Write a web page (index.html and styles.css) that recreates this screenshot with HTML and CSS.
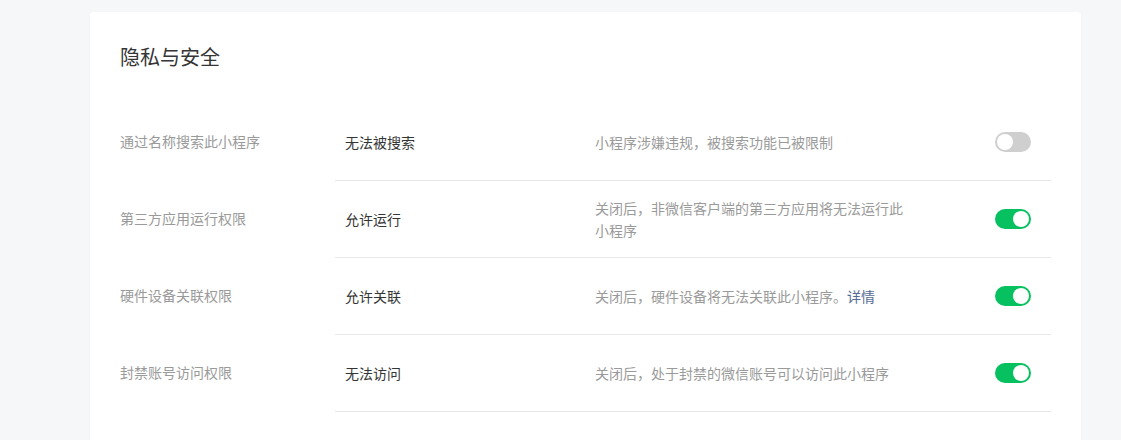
FILE: index.html
```html
<!DOCTYPE html>
<html lang="zh-CN">
<head>
    <meta charset="UTF-8">
    <meta name="viewport" content="width=device-width, initial-scale=1.0">
    <title>隐私与安全</title>
    <link rel="stylesheet" href="styles.css">
</head>
<body>
    <div class="panel">
        <h2 class="panel-title">隐私与安全</h2>

        <div class="setting-list">
            <div class="setting-row">
                <div class="setting-label">通过名称搜索此小程序</div>
                <div class="setting-body">
                    <div class="setting-value">无法被搜索</div>
                    <div class="setting-desc">小程序涉嫌违规，被搜索功能已被限制</div>
                    <div class="switch"></div>
                </div>
            </div>
            <div class="setting-row">
                <div class="setting-label">第三方应用运行权限</div>
                <div class="setting-body">
                    <div class="setting-value">允许运行</div>
                    <div class="setting-desc">关闭后，非微信客户端的第三方应用将无法运行此小程序</div>
                    <div class="switch on"></div>
                </div>
            </div>
            <div class="setting-row">
                <div class="setting-label">硬件设备关联权限</div>
                <div class="setting-body">
                    <div class="setting-value">允许关联</div>
                    <div class="setting-desc">关闭后，硬件设备将无法关联此小程序。<a href="#" class="link">详情</a></div>
                    <div class="switch on"></div>
                </div>
            </div>
            <div class="setting-row">
                <div class="setting-label">封禁账号访问权限</div>
                <div class="setting-body">
                    <div class="setting-value">无法访问</div>
                    <div class="setting-desc">关闭后，处于封禁的微信账号可以访问此小程序</div>
                    <div class="switch on"></div>
                </div>
            </div>
        </div>
    </div>
</body>
</html>
```

FILE: styles.css
```css
body {
    font-family: "Noto Sans CJK SC", "Noto Sans", sans-serif;
    margin: 0;
    padding: 12px 0 0 90px;
    background-color: #f6f7f9;
    font-size: 14px;
    overflow: hidden;
}

.panel {
    box-sizing: border-box;
    width: 991px;
    height: 428px;
    padding: 31px 30px 0;
    background-color: white;
    border-radius: 4px 4px 0 0;
    box-shadow: 0 1px 2px rgba(150, 150, 150, 0.08);
}

.panel-title {
    margin: 0 0 33px;
    font-size: 20px;
    line-height: 28px;
    font-weight: normal;
    color: #353535;
}

.setting-row {
    display: flex;
}

.setting-label {
    width: 215px;
    flex-shrink: 0;
    display: flex;
    align-items: center;
    padding-bottom: 3px;
    color: #9a9a9a;
}

.setting-body {
    flex: 1;
    height: 76px;
    display: flex;
    align-items: center;
    padding: 0 20px 0 10px;
    border-bottom: 1px solid #e7e7eb;
}

.setting-value {
    width: 250px;
    flex-shrink: 0;
    color: #353535;
}

.setting-desc {
    width: 320px;
    color: #9a9a9a;
    line-height: 22px;
}

.link {
    color: #576b95;
    text-decoration: none;
}

.switch {
    margin-left: auto;
    width: 36px;
    height: 20px;
    border-radius: 10px;
    background-color: #cfcfcf;
    position: relative;
}

.switch::after {
    content: "";
    position: absolute;
    top: 2px;
    left: 2px;
    width: 16px;
    height: 16px;
    border-radius: 50%;
    background-color: white;
}

.switch.on {
    background-color: #07c160;
}

.switch.on::after {
    left: 18px;
}
```
